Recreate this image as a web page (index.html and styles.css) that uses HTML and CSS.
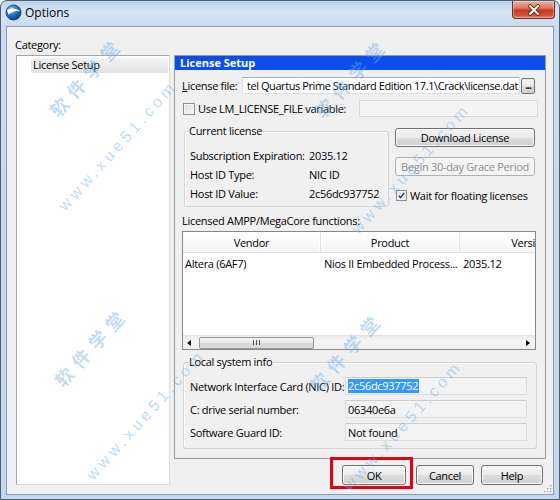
FILE: index.html
```html
<!DOCTYPE html>
<html>
<head>
<meta charset="utf-8">
<title>Options</title>
<link rel="stylesheet" href="styles.css">
</head>
<body>
<div class="window">
  <div class="titlebar">
    <svg class="app-icon" viewBox="0 0 18 18">
      <defs>
        <radialGradient id="ig" cx="35%" cy="30%" r="80%">
          <stop offset="0" stop-color="#8cc8f7"/>
          <stop offset="0.5" stop-color="#2270c6"/>
          <stop offset="1" stop-color="#0a3172"/>
        </radialGradient>
      </defs>
      <circle cx="9" cy="9" r="8" fill="url(#ig)" stroke="#0c2f66" stroke-width="0.8"/>
      <path d="M2.2 6.5 C6 3.8 12.5 4 16.2 8 C12.5 6.6 7.5 7.6 3.6 11.2 Z" fill="#ffffff"/>
    </svg>
    <span class="title">Options</span>
    <div class="close">
      <svg viewBox="0 0 16 12" width="16" height="12">
        <path d="M4 2 L12 10 M12 2 L4 10" stroke="#5a1d12" stroke-width="3.6" stroke-linecap="round"/>
        <path d="M4 2 L12 10 M12 2 L4 10" stroke="#ffffff" stroke-width="2" stroke-linecap="round"/>
      </svg>
    </div>
  </div>

  <div class="client">
    <div class="cat-label">Category:</div>
    <div class="body">
      <div class="tree">
        <div class="tree-item">License Setup</div>
      </div>
      <div class="right">
        <div class="panel">
          <div class="panel-header">License Setup</div>
          <div class="panel-content">
            <div class="file-row">
              <span class="file-label"><u>L</u>icense file:</span>
              <div class="input"><span class="input-text">tel Quartus Prime Standard Edition 17.1\Crack\license.dat</span></div>
              <span class="browse">...</span>
            </div>
            <div class="env-row">
              <span class="checkbox"></span>
              <span class="env-text">Use LM_LICENSE_FILE variable:</span>
              <div class="input disabled"></div>
            </div>
            <div class="license-row">
              <fieldset class="group current">
                <legend>Current license</legend>
                <div class="kv">
                  <span>Subscription Expiration:</span><span>2035.12</span>
                  <span>Host ID Type:</span><span>NIC ID</span>
                  <span>Host ID Value:</span><span>2c56dc937752</span>
                </div>
              </fieldset>
              <div class="actions">
                <span class="btn download">Download License</span>
                <span class="btn grace disabled">Begin 30-day Grace Period</span>
                <div class="wait-row">
                  <span class="checkbox checked">
                    <svg viewBox="0 0 11 11" width="11" height="11"><path d="M2.2 5.6 L4.4 8.2 L8.8 2.2" fill="none" stroke="#21357a" stroke-width="1.6"/></svg>
                  </span>
                  <span class="wait-text">Wait for floating licenses</span>
                </div>
              </div>
            </div>
            <div class="section-label">Licensed AMPP/MegaCore functions:</div>
            <div class="table">
              <div class="thead">
                <div class="th c1">Vendor</div>
                <div class="th c2">Product</div>
                <div class="th c3"><span class="clip">Versi</span></div>
              </div>
              <div class="tbody">
                <div class="tr">
                  <div class="td c1">Altera (6AF7)</div>
                  <div class="td c2">Nios II Embedded Process...</div>
                  <div class="td c3">2035.12</div>
                </div>
              </div>
              <div class="hscroll">
                <span class="arrow-left"></span>
                <div class="thumb"><span class="grip"></span></div>
                <span class="arrow-right"></span>
              </div>
            </div>
            <fieldset class="group local">
              <legend>Local system info</legend>
              <div class="info">
                <span class="info-label">Network Interface Card (NIC) ID:</span>
                <div class="field"><span class="selected">2c56dc937752</span></div>
                <span class="info-label">C: drive serial number:</span>
                <div class="field">06340e6a</div>
                <span class="info-label">Software Guard ID:</span>
                <div class="field">Not found</div>
              </div>
            </fieldset>
          </div>
        </div>
        <div class="buttons">
          <span class="ok-wrap"><span class="btn dlg ok">OK</span></span>
          <span class="btn dlg cancel">Cancel</span>
          <span class="btn dlg help">Help</span>
        </div>
      </div>
    </div>
    <svg class="grip-corner" viewBox="0 0 8 8" width="8" height="8">
      <g fill="#a0a0a0">
        <rect x="6" y="0" width="1.3" height="1.3"/>
        <rect x="3" y="3" width="1.3" height="1.3"/><rect x="6" y="3" width="1.3" height="1.3"/>
        <rect x="0" y="6" width="1.3" height="1.3"/><rect x="3" y="6" width="1.3" height="1.3"/><rect x="6" y="6" width="1.3" height="1.3"/>
      </g>
    </svg>
  </div>

  <span class="wm cn wm-a">软件学堂</span>
  <span class="wm cn wm-b">软件学堂</span>
  <span class="wm cn wm-c">软件学堂</span>
  <span class="wm cn wm-d">软件学堂</span>
  <span class="wm url wm-e">www.xue51.com</span>
  <span class="wm url wm-f">www.xue51.com</span>
  <span class="wm url wm-g">www.xue51.com</span>
  <span class="wm url wm-h">www.xue51.com</span>
</div>
</body>
</html>
```

FILE: styles.css
```css
* { box-sizing: border-box; }
html, body { margin: 0; padding: 0; }
body {
  width: 560px;
  height: 500px;
  overflow: hidden;
  background: #ffffff;
  font-family: "Open Sans", "Noto Sans", sans-serif;
  font-size: 11px;
  letter-spacing: -0.3px;
  color: #000;
}

.window {
  position: relative;
  width: 560px;
  height: 500px;
  border: 1px solid #4f5e70;
  border-radius: 7px 7px 0 0;
  background: linear-gradient(180deg, #bdd3ec 0, #d6e5f5 11px, #cadcf0 25px, #c3d7ee 100%);
  display: flex;
  flex-direction: column;
  overflow: hidden;
}

/* title bar */
.titlebar {
  height: 25px;
  flex: none;
  display: flex;
  align-items: flex-start;
  padding-left: 4px;
}
.app-icon { width: 17px; height: 17px; margin-top: 3px; flex: none; }
.title { margin-left: 3px; margin-top: 4px; font-size: 12px; line-height: 15px; letter-spacing: 0; }
.close {
  margin-left: auto;
  margin-right: 4px;
  width: 43px;
  height: 18px;
  border: 1px solid #6b2b21;
  border-top: none;
  border-radius: 0 0 4px 4px;
  background: linear-gradient(180deg, #eab0a2 0, #db7a66 40%, #c23a20 55%, #cf5438 85%, #e0856b 100%);
  box-shadow: inset 0 0 0 1px rgba(255,255,255,0.35);
  display: flex;
  align-items: center;
  justify-content: center;
}

/* client area */
.client {
  position: relative;
  flex: 1;
  margin: 0 5px 5px 5px;
  background: #f0f0f0;
  border: 1px solid #8c9db2;
  padding: 10px 7px 9px 8px;
  display: flex;
  flex-direction: column;
}
.cat-label { line-height: 15px; margin-bottom: 3px; }
.body { flex: 1; display: flex; gap: 4px; min-height: 0; }

.tree {
  width: 154px;
  margin-left: 1px;
  flex: none;
  background: #ffffff;
  border: 1px solid #a5a5a5;
  border-right-color: #dcdcdc;
  border-bottom-color: #dcdcdc;
  padding: 2px 1px 0 14px;
}
.tree-item {
  height: 15px;
  line-height: 14px;
  padding-left: 2px;
  background: linear-gradient(180deg, #f2f2f2, #e2e2e2);
  border-radius: 2px;
}

.right { width: 372px; flex: none; display: flex; flex-direction: column; }

.panel {
  height: 404px;
  border: 1px solid #9c9c9c;
  background: #f0f0f0;
}
.panel-header {
  height: 14px;
  line-height: 14px;
  padding-left: 5px;
  background: #0b4ef0;
  color: #ffffff;
  font-weight: bold;
  letter-spacing: 0;
}
.panel-content { padding: 0 7px 0 7px; }

.file-row { display: flex; align-items: center; margin-top: 7px; height: 17px; }
.file-label { width: 60px; flex: none; }
.input {
  width: 278px;
  height: 17px;
  flex: none;
  background: #ffffff;
  border: 1px solid #dbdfe6;
  border-top-color: #abadb3;
  display: flex;
  justify-content: flex-end;
  align-items: center;
  overflow: hidden;
  padding-right: 1px;
}
.input-text { white-space: nowrap; letter-spacing: -0.42px; }
.browse {
  width: 14px;
  height: 16px;
  margin-left: 1px;
  flex: none;
  border: 1px solid #707070;
  border-radius: 2px;
  background: linear-gradient(180deg, #f2f2f2 0, #ebebeb 50%, #dddddd 50%, #cfcfcf 100%);
  font-size: 10px;
  line-height: 12px;
  text-align: center;
  letter-spacing: -1px;
  font-weight: bold;
  overflow: hidden;
}

.env-row { display: flex; align-items: center; margin-top: 6px; height: 17px; }
.checkbox {
  width: 12px;
  height: 12px;
  flex: none;
  margin-left: 1px;
  border: 1px solid #8e8f8f;
  background: linear-gradient(135deg, #dcdcdc, #f7f7f7);
  box-shadow: inset 0 0 0 1px #f4f4f4;
  display: inline-flex;
  align-items: center;
  justify-content: center;
}
.env-text { margin-left: 3px; }
.input.disabled {
  width: 179px;
  margin-left: auto;
  background: #f4f4f4;
  border: 1px solid #dadada;
}

.license-row { display: flex; margin-top: 7px; }
.group {
  margin: 0;
  min-width: 0;
  border: 1px solid #d3d3d3;
  border-radius: 3px;
  box-shadow: inset 1px 1px 0 #ffffff;
}
.group legend { padding: 0 1px; margin-left: -2px; line-height: 14px; }
.group.current {
  width: 205px;
  margin-left: 2px;
  padding: 8px 0 3px 5px;
}
.kv {
  display: grid;
  grid-template-columns: 119px auto;
  grid-auto-rows: 19px;
  align-items: center;
}

.actions { width: 140px; margin-left: 6px; display: flex; flex-direction: column; }
.btn {
  display: flex;
  align-items: center;
  justify-content: center;
  height: 19px;
  border: 1px solid #707070;
  border-radius: 3px;
  background: linear-gradient(180deg, #f2f2f2 0, #ebebeb 50%, #dddddd 50%, #cfcfcf 100%);
  box-shadow: inset 0 0 0 1px #fbfbfb;
  white-space: nowrap;
}
.btn.download { margin-top: 4px; }
.btn.grace { margin-top: 10px; }
.btn.disabled {
  background: #f4f4f4;
  border-color: #adb2b5;
  color: #8d8d8d;
  box-shadow: none;
}
.wait-row { display: flex; align-items: center; height: 14px; margin-top: 12px; }
.wait-row .checkbox { width: 11px; height: 11px; }
.wait-text { margin-left: 3px; }

.section-label { margin-top: 6px; line-height: 15px; }

.table {
  margin-top: 3px;
  width: 354px;
  height: 119px;
  border: 1px solid #828790;
  background: #ffffff;
  display: flex;
  flex-direction: column;
  overflow: hidden;
}
.thead {
  height: 21px;
  flex: none;
  display: flex;
  background: linear-gradient(180deg, #ffffff, #f4f5f7);
  border-bottom: 1px solid #dfe2e7;
}
.th {
  flex: none;
  display: flex;
  align-items: center;
  justify-content: center;
  border-right: 1px solid #e1e3e8;
  box-shadow: inset -1px 0 0 #ffffff;
}
.th.c3 { width: 75px; justify-content: flex-end; border-right: none; box-shadow: none; }
.clip { padding-right: 0; }
.c1 { width: 138px; }
.c2 { width: 139px; }
.c3 { width: 75px; }
.tbody { flex: 1; }
.tr { display: flex; height: 21px; align-items: center; }
.td { flex: none; padding-left: 3px; white-space: nowrap; overflow: hidden; }
.td.c1 { padding-left: 2px; }

.hscroll {
  height: 14px;
  flex: none;
  display: flex;
  align-items: center;
  background: linear-gradient(180deg, #ebebeb, #f5f5f5 40%, #f0f0f0);
  border-top: 1px solid #e2e2e2;
  padding-left: 4px;
}
.arrow-left {
  width: 0; height: 0;
  border-top: 3px solid transparent;
  border-bottom: 3px solid transparent;
  border-right: 4px solid #000;
}
.thumb {
  margin-left: 8px;
  width: 115px;
  height: 12px;
  border: 1px solid #979797;
  border-radius: 2px;
  background: linear-gradient(180deg, #f4f4f4 0, #e8e8e8 50%, #d8d8d8 51%, #dadada 100%);
  display: flex;
  align-items: center;
  justify-content: center;
}
.grip {
  width: 7px;
  height: 5px;
  background: repeating-linear-gradient(90deg, #555 0 1px, transparent 1px 3px);
}
.arrow-right {
  margin-left: auto;
  margin-right: 5px;
  width: 0; height: 0;
  border-top: 3.5px solid transparent;
  border-bottom: 3.5px solid transparent;
  border-left: 4px solid #000;
}

.group.local {
  width: 354px;
  margin-top: 5px;
  margin-left: 1px;
  padding: 8px 0 7px 6px;
}
.info {
  display: grid;
  grid-template-columns: 155px 182px;
  grid-auto-rows: 18px;
  row-gap: 5px;
  align-items: center;
}
.info-label { white-space: nowrap; }
.field {
  height: 18px;
  display: flex;
  align-items: center;
  padding-left: 2px;
  background: #f3f3f3;
  border: 1px solid #dedede;
  border-top-color: #cccccc;
}
.selected { background: #3399ff; color: #ffffff; line-height: 14px; padding-right: 1px; }

.buttons {
  display: flex;
  justify-content: flex-end;
  margin-top: 6px;
  padding-right: 3px;
}
.btn.dlg { height: 20px; }
.ok-wrap { position: relative; display: block; }
.ok-wrap::after {
  content: "";
  position: absolute;
  left: -12px;
  right: -7px;
  top: -8px;
  bottom: -4px;
  border: 3px solid #e60012;
}
.btn.ok { width: 64px; }
.btn.cancel { width: 58px; margin-left: 10px; }
.btn.help { width: 62px; margin-left: 7px; }

.grip-corner { position: absolute; right: 1px; bottom: 1px; }

/* watermarks */
.wm {
  position: absolute;
  transform: translate(-50%, -50%) rotate(-48deg);
  white-space: nowrap;
  color: rgba(105, 170, 228, 0.42);
  pointer-events: none;
}
.wm.cn { font-family: "Noto Sans CJK SC", sans-serif; font-size: 18px; font-weight: bold; letter-spacing: 7px; }
.wm.url { font-family: "Liberation Sans", sans-serif; font-size: 16px; letter-spacing: 4px; }
.wm-a { left: 85px; top: 75px; }
.wm-b { left: 350px; top: 76px; }
.wm-c { left: 90px; top: 345px; }
.wm-d { left: 345px; top: 350px; }
.wm-e { left: 117px; top: 145px; }
.wm-f { left: 410px; top: 168px; }
.wm-g { left: 145px; top: 414px; }
.wm-h { left: 402px; top: 425px; }
```
